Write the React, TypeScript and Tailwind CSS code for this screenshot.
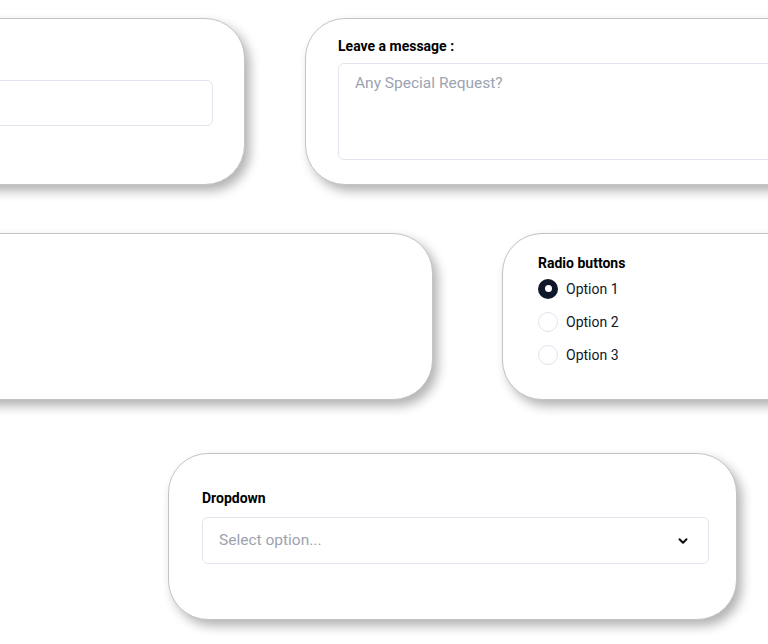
import { ChevronDown } from "lucide-react";
import * as React from "react";

const card =
	"shrink-0 h-[167px] rounded-[40px] bg-white border border-[#c4c4c4] shadow-[5px_6px_11px_rgba(0,0,0,0.3)]";
const label = "text-[14px] leading-5 font-bold text-black";
const field = "rounded-md border border-[#e3e5ee] bg-white";

function Radio({ label, checked }: { label: string; checked?: boolean }) {
	return (
		<div className="flex items-center gap-2 h-[33px]">
			{checked ? (
				<span className="w-5 h-5 rounded-full bg-[#0f172a] flex items-center justify-center">
					<span className="w-[7px] h-[7px] rounded-full bg-white" />
				</span>
			) : (
				<span className="w-5 h-5 rounded-full border border-[#e1e3ee] bg-white" />
			)}
			<span className="text-[14px] leading-5 text-[#111827]">{label}</span>
		</div>
	);
}

export default function App() {
	return (
		<div className="w-[768px] h-[644px] overflow-hidden bg-white font-['Roboto',sans-serif]">
			<div className="flex flex-col pt-[18px]">
				{/* top row */}
				<div className="flex gap-[60px] ml-[-255px]">
					<div className={`${card} w-[500px] flex items-center pr-[31px]`}>
						<div className={`${field} flex-1 h-[46px] ml-[160px] mt-[2px]`} />
					</div>
					<div className={`${card} w-[520px] pl-[32px] pt-[17px]`}>
						<div className={`${label} mb-[7px]`}>Leave a message :</div>
						<div className={`${field} w-[470px] h-[97px] px-4 pt-[7px]`}>
							<span className="text-[15.5px] leading-6 text-[#9ca3af]">
								Any Special Request?
							</span>
						</div>
					</div>
				</div>

				{/* middle row */}
				<div className="flex gap-[69px] mt-[48px] ml-[-67px]">
					<div className={`${card} w-[500px]`} />
					<div className={`${card} w-[320px] pl-[35px] pt-[19px]`}>
						<div className={label}>Radio buttons</div>
						<div className="flex flex-col mt-[-1px]">
							<Radio label="Option 1" checked />
							<Radio label="Option 2" />
							<Radio label="Option 3" />
						</div>
					</div>
				</div>

				{/* dropdown */}
				<div
					className={`${card} w-[569px] ml-[168px] mt-[53px] pl-[33px] pr-[27px] pt-[34px]`}
				>
					<div className={`${label} mb-[9px]`}>Dropdown</div>
					<div
						className={`${field} h-[47px] flex items-center justify-between pl-4 pr-[18px]`}
					>
						<span className="text-[15.5px] text-[#9ca3af]">Select option...</span>
						<ChevronDown size={14} strokeWidth={3.5} className="text-[#111]" />
					</div>
				</div>
			</div>
		</div>
	);
}
